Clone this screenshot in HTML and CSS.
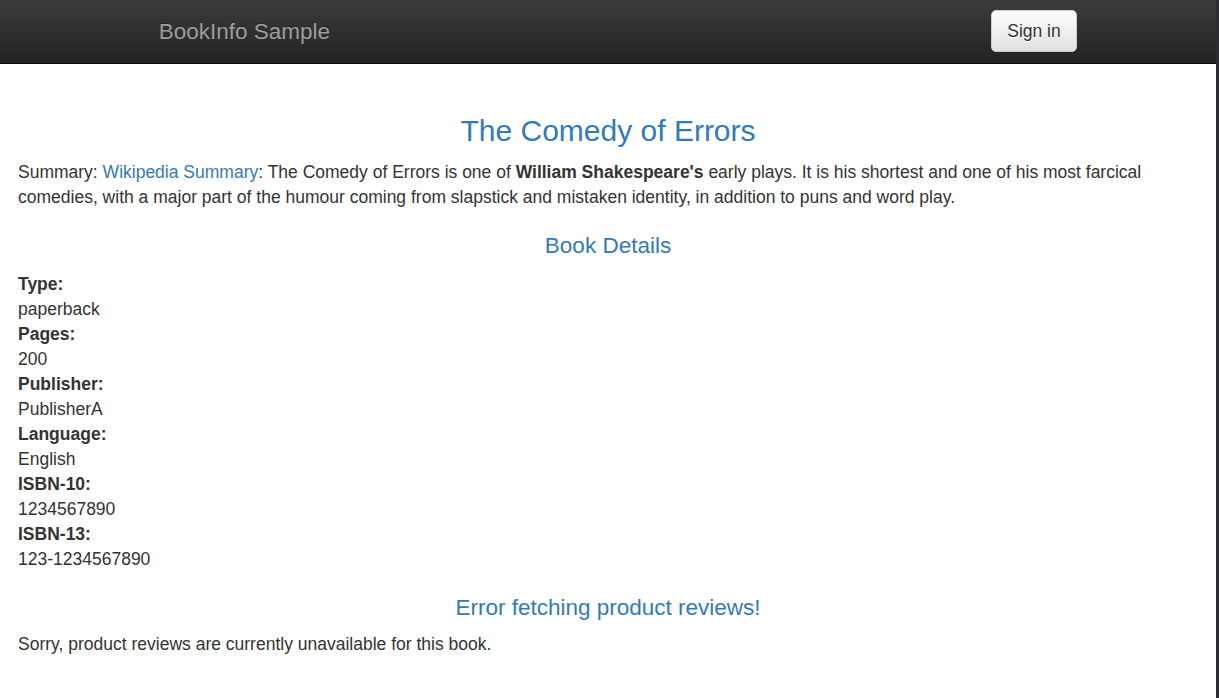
FILE: index.html
```html
<!DOCTYPE html>
<html lang="en">
<head>
<meta charset="utf-8">
<title>Simple Bookstore App</title>
<link rel="stylesheet" href="styles.css">
</head>
<body>
<div class="window">
  <div class="page">
    <nav class="navbar">
      <div class="navbar-inner">
        <a class="brand" href="#">BookInfo Sample</a>
        <button class="btn-signin" type="button">Sign in</button>
      </div>
    </nav>
    <main class="content">
      <h3 class="title">The Comedy of Errors</h3>
      <p class="summary">Summary: <a class="link" href="#">Wikipedia Summary</a>: The Comedy of Errors is one of <b>William Shakespeare's</b> early plays. It is his shortest and one of his most farcical comedies, with a major part of the humour coming from slapstick and mistaken identity, in addition to puns and word play.</p>
      <h4 class="section-title details-title">Book Details</h4>
      <dl class="details">
        <dt>Type:</dt><dd>paperback</dd>
        <dt>Pages:</dt><dd>200</dd>
        <dt>Publisher:</dt><dd>PublisherA</dd>
        <dt>Language:</dt><dd>English</dd>
        <dt>ISBN-10:</dt><dd>1234567890</dd>
        <dt>ISBN-13:</dt><dd>123-1234567890</dd>
      </dl>
      <h4 class="section-title reviews-title">Error fetching product reviews!</h4>
      <p class="sorry">Sorry, product reviews are currently unavailable for this book.</p>
    </main>
  </div>
  <div class="edge"></div>
</div>
</body>
</html>
```

FILE: styles.css
```css
* { box-sizing: border-box; }

html, body {
  margin: 0;
  padding: 0;
  height: 100%;
  background: #fff;
}

body {
  font-family: "Liberation Sans", Arial, Helvetica, sans-serif;
  font-size: 17.5px;
  line-height: 25px;
  color: #333;
}

.window {
  display: grid;
  grid-template-columns: 1fr 3px;
  min-height: 100%;
}

.page {
  min-width: 0;
}

.edge {
  background: #302c33;
}

.navbar {
  height: 64px;
  background-image: linear-gradient(to bottom, #3c3c3c 0%, #222222 100%);
  border-bottom: 1px solid #080808;
}

.navbar-inner {
  width: 937.5px;
  margin: 0 auto;
  display: flex;
  justify-content: space-between;
  align-items: flex-start;
}

.brand {
  display: block;
  padding: 18.75px 18.75px 18.75px 19.5px;
  height: 62.5px;
  font-size: 22.5px;
  line-height: 25px;
  color: #9d9d9d;
  text-decoration: none;
  text-shadow: 0 -1px 0 rgba(0, 0, 0, 0.25);
}

.btn-signin {
  margin-top: 10px;
  padding: 7.5px 15px;
  font-family: inherit;
  font-size: 17.5px;
  line-height: 25px;
  color: #333;
  background-image: linear-gradient(to bottom, #ffffff 0%, #e0e0e0 100%);
  border: 1px solid #ccc;
  border-radius: 5px;
  text-shadow: 0 1px 0 #fff;
  box-shadow: inset 0 1px 0 rgba(255, 255, 255, 0.15), 0 1px 1px rgba(0, 0, 0, 0.075);
  cursor: pointer;
}

.content {
  padding: 25px 18px 0;
}

.title {
  margin: 25px 0 12.5px;
  font-size: 30px;
  line-height: 33px;
  font-weight: 500;
  text-align: center;
  color: #337ab7;
}

.summary {
  margin: 0 0 12.5px;
}

.link {
  color: #337ab7;
  text-decoration: none;
}

.summary b {
  font-weight: 700;
}

.section-title {
  margin: 24px 0 13.5px;
  font-size: 22.5px;
  line-height: 24.75px;
  font-weight: 500;
  text-align: center;
  color: #337ab7;
}

.reviews-title {
  margin-bottom: 11.5px;
}

.details {
  margin: 0 0 24px;
}

.details dt {
  font-weight: 700;
}

.details dd {
  margin: 0;
}

.sorry {
  margin: 0 0 12.5px;
}
```
